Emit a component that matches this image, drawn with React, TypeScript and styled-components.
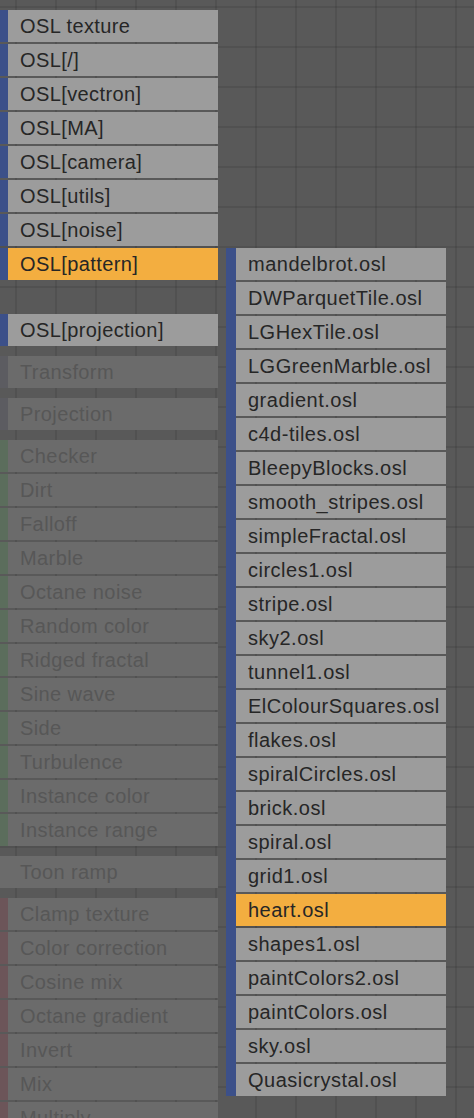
import React from "react";
import styled, { createGlobalStyle } from "styled-components";

const Global = createGlobalStyle`
  html, body {
    margin: 0;
    padding: 0;
    height: 100%;
  }
  body {
    background-color: #595959;
    background-image:
      linear-gradient(to right, rgba(0,0,0,0.09) 2px, transparent 2px),
      linear-gradient(to bottom, rgba(0,0,0,0.09) 2px, transparent 2px);
    background-size: 40px 40px;
    background-position: 15px 6px;
    font-family: "Liberation Sans", Arial, sans-serif;
    overflow: hidden;
  }
`;

type Tone = "blue" | "gray" | "green" | "red" | "none";
type State = "normal" | "active" | "disabled";

const stripeColors: Record<State, Record<Tone, string>> = {
  normal: { blue: "#3c5089", gray: "#5c5c60", green: "#5c6e5c", red: "#6b5559", none: "transparent" },
  active: { blue: "#3c5089", gray: "#5c5c60", green: "#5c6e5c", red: "#6b5559", none: "transparent" },
  disabled: { blue: "#4a5066", gray: "#5c5c61", green: "#5b6d5c", red: "#6c5559", none: "transparent" },
};

const Page = styled.div`
  display: flex;
  align-items: flex-start;
  gap: 8px;
  height: 1118px;
  overflow: hidden;
`;

const LeftColumn = styled.div`
  width: 218px;
  padding-top: 10px;
  display: flex;
  flex-direction: column;
  gap: 10px;
`;

const Group = styled.div`
  display: flex;
  flex-direction: column;
  gap: 2px;
`;

const Row = styled.div<{ $tone: Tone; $state: State }>`
  height: 32px;
  box-sizing: border-box;
  border-left: 8px solid ${(p) => stripeColors[p.$state][p.$tone]};
  background: ${(p) =>
    p.$state === "active" ? "#f3ae40" : p.$state === "disabled" ? "#6b6b6b" : "#9c9c9c"};
  color: ${(p) => (p.$state === "disabled" ? "#575757" : "#262626")};
  font-size: 20px;
  letter-spacing: 0.4px;
  line-height: 33px;
  padding-left: 12px;
  white-space: nowrap;
  overflow: hidden;
`;

const Spacer = styled.div`
  height: 30px;
`;

const SubMenu = styled.div`
  margin-top: 248px;
  width: 220px;
  box-sizing: border-box;
  border-left: 10px solid #3c5089;
  display: flex;
  flex-direction: column;
  gap: 2px;
`;

const SubItem = styled.div<{ $active?: boolean }>`
  height: 32px;
  background: ${(p) => (p.$active ? "#f3ae40" : "#9c9c9c")};
  color: #262626;
  font-size: 20px;
  letter-spacing: 0.5px;
  line-height: 33px;
  padding-left: 12px;
  white-space: nowrap;
  overflow: hidden;
`;

const oslItems = ["OSL texture", "OSL[/]", "OSL[vectron]", "OSL[MA]", "OSL[camera]", "OSL[utils]", "OSL[noise]"];

const greenItems = [
  "Checker", "Dirt", "Falloff", "Marble", "Octane noise", "Random color",
  "Ridged fractal", "Sine wave", "Side", "Turbulence", "Instance color", "Instance range",
];

const redItems = ["Clamp texture", "Color correction", "Cosine mix", "Octane gradient", "Invert", "Mix", "Multiply"];

const files = [
  "mandelbrot.osl", "DWParquetTile.osl", "LGHexTile.osl", "LGGreenMarble.osl", "gradient.osl",
  "c4d-tiles.osl", "BleepyBlocks.osl", "smooth_stripes.osl", "simpleFractal.osl", "circles1.osl",
  "stripe.osl", "sky2.osl", "tunnel1.osl", "ElColourSquares.osl", "flakes.osl", "spiralCircles.osl",
  "brick.osl", "spiral.osl", "grid1.osl", "heart.osl", "shapes1.osl", "paintColors2.osl",
  "paintColors.osl", "sky.osl", "Quasicrystal.osl",
];

export default function App() {
  return (
    <>
      <Global />
      <Page>
        <LeftColumn>
          <Group>
            {oslItems.map((t) => (
              <Row key={t} $tone="blue" $state="normal">{t}</Row>
            ))}
            <Row $tone="blue" $state="active">OSL[pattern]</Row>
            <Spacer />
            <Row $tone="blue" $state="normal">OSL[projection]</Row>
          </Group>
          <Group>
            <Row $tone="gray" $state="disabled">Transform</Row>
          </Group>
          <Group>
            <Row $tone="gray" $state="disabled">Projection</Row>
          </Group>
          <Group>
            {greenItems.map((t) => (
              <Row key={t} $tone="green" $state="disabled">{t}</Row>
            ))}
          </Group>
          <Group>
            <Row $tone="none" $state="disabled">Toon ramp</Row>
          </Group>
          <Group>
            {redItems.map((t) => (
              <Row key={t} $tone="red" $state="disabled">{t}</Row>
            ))}
          </Group>
        </LeftColumn>
        <SubMenu>
          {files.map((f) => (
            <SubItem key={f} $active={f === "heart.osl"}>{f}</SubItem>
          ))}
        </SubMenu>
      </Page>
    </>
  );
}
